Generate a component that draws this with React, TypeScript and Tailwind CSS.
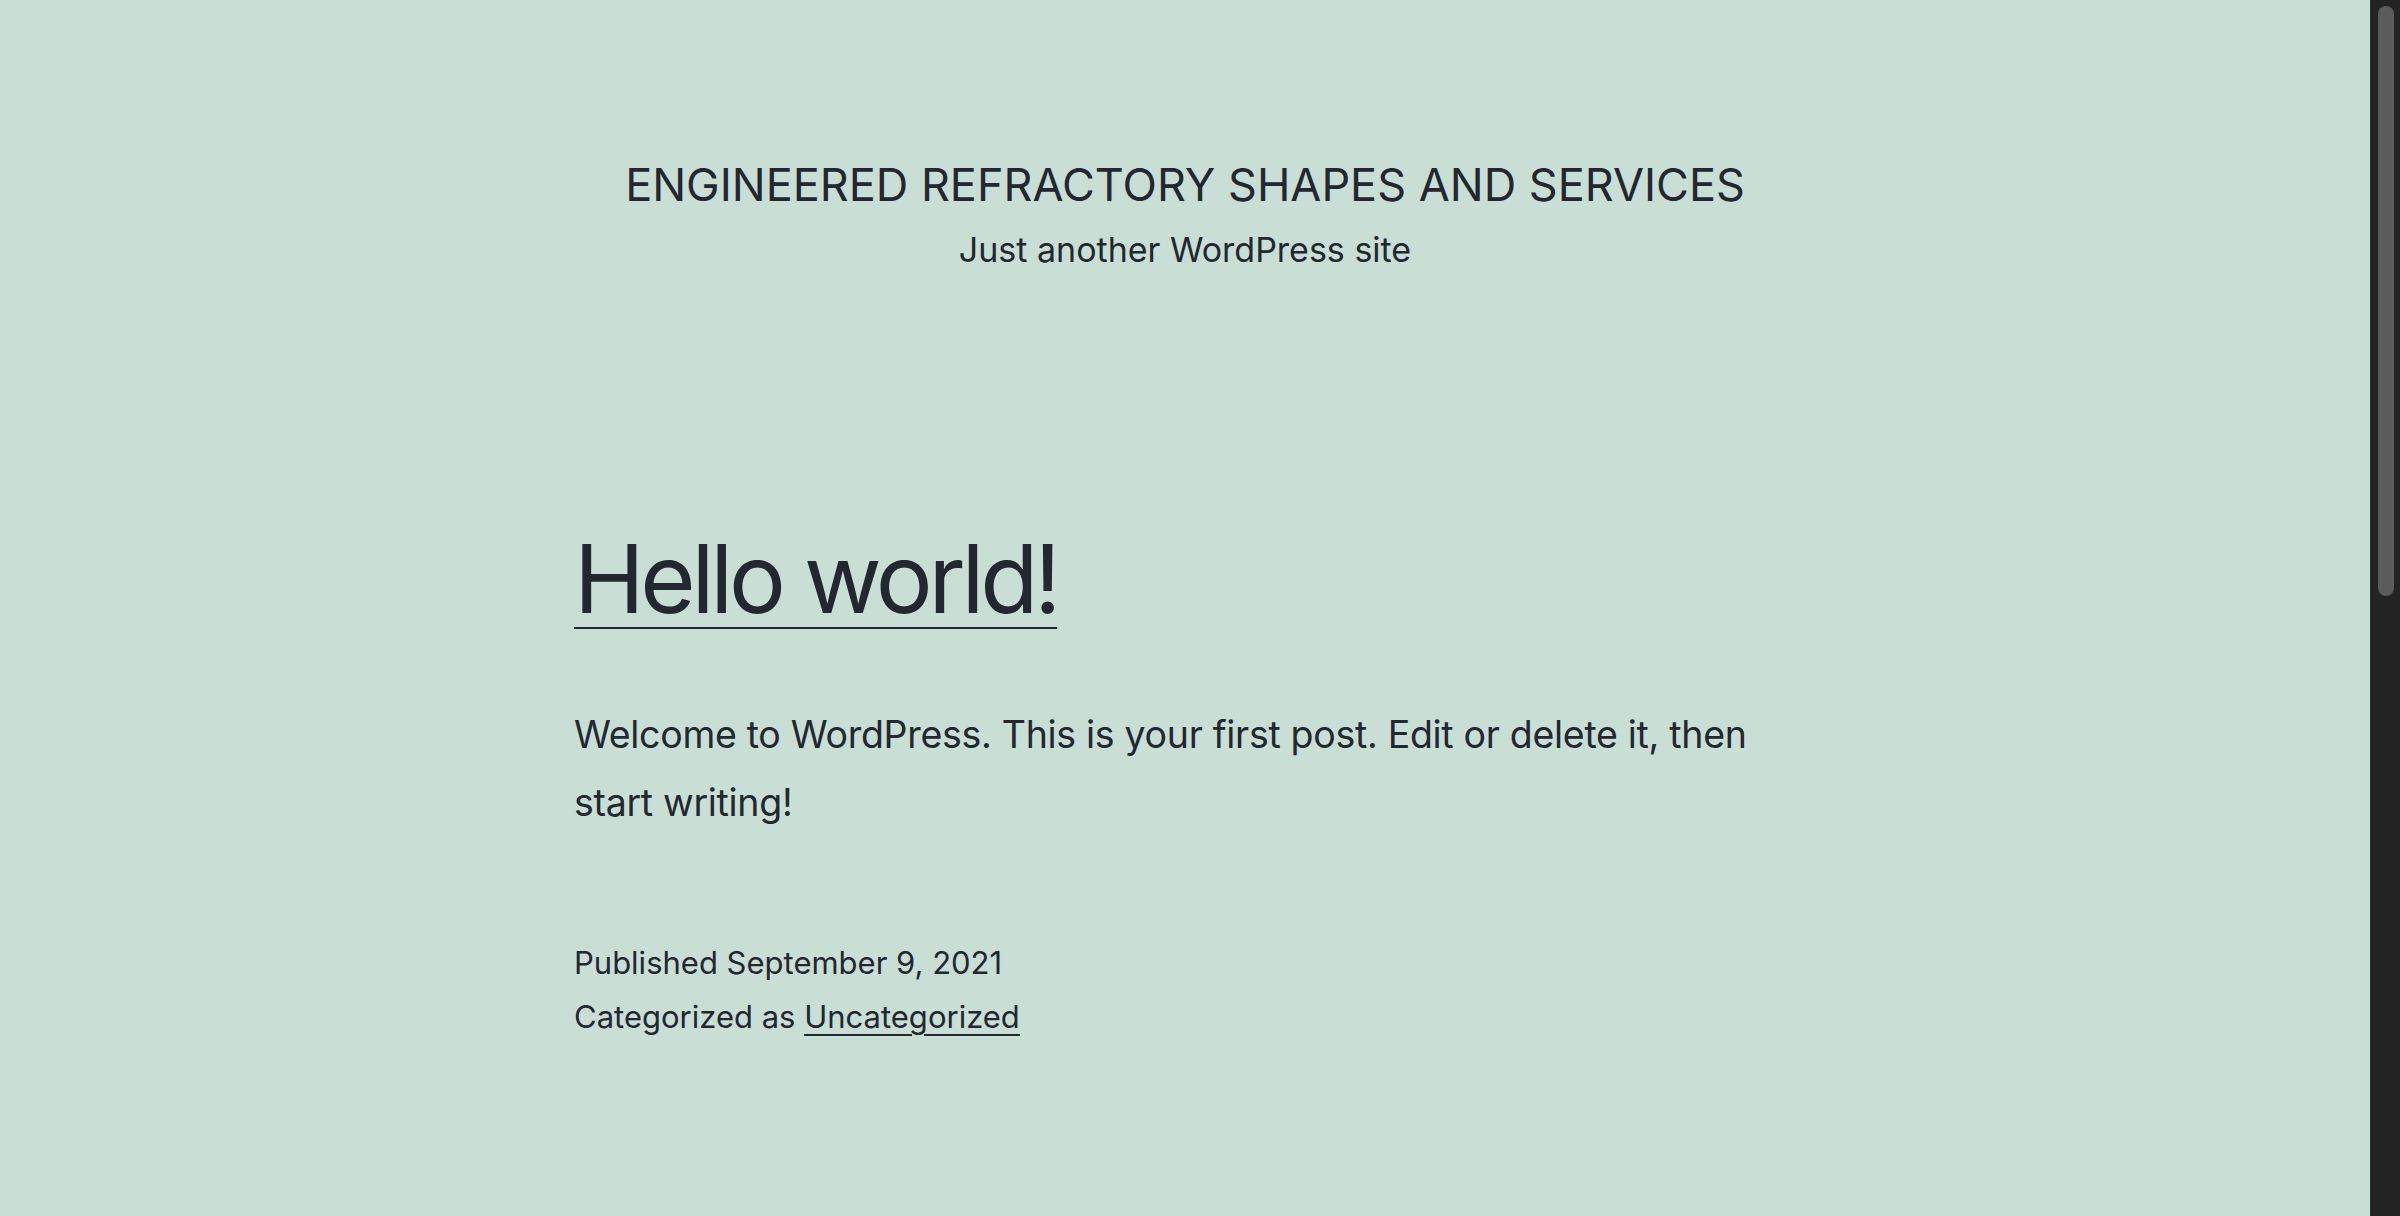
import React from 'react';

const App: React.FC = () => {
    return (
        <div className="flex h-[1216px] w-[2400px] overflow-hidden">
            <div className="w-[2370px] bg-[#c9ded5] text-[#222730] font-['Inter','Liberation_Sans',sans-serif]">
                <header className="pt-[156px] text-center">
                    <p className="text-[45px] leading-[58px] uppercase">Engineered Refractory Shapes and Services</p>
                    <p className="mt-[13px] text-[34px] leading-[46px]">Just another WordPress site</p>
                </header>

                <main className="mx-auto w-[1222px]">
                    <h1 className="mt-[253px] text-[95px] leading-[105px] tracking-[-0.045em]">
                        <a href="#" className="underline decoration-2 underline-offset-[14px]">Hello world!</a>
                    </h1>
                    <p className="mt-[70px] text-[37.5px] leading-[68px] tracking-[-0.3px]">
                        Welcome to WordPress. This is your first post. Edit or delete it, then start writing!
                    </p>
                    <div className="mt-[99px] text-[31px] leading-[54px]">
                        <p>Published September 9, 2021</p>
                        <p>
                            Categorized as{' '}
                            <a href="#" className="underline decoration-2 underline-offset-[6px]">Uncategorized</a>
                        </p>
                    </div>
                </main>
            </div>

            <div className="w-[30px] bg-[#232323] border-l border-[#2e2e2e] pt-[6px] pl-[7px]">
                <div className="h-[590px] w-[16px] rounded-full bg-[#5b5b5b]"></div>
            </div>
        </div>
    );
};

export default App;
